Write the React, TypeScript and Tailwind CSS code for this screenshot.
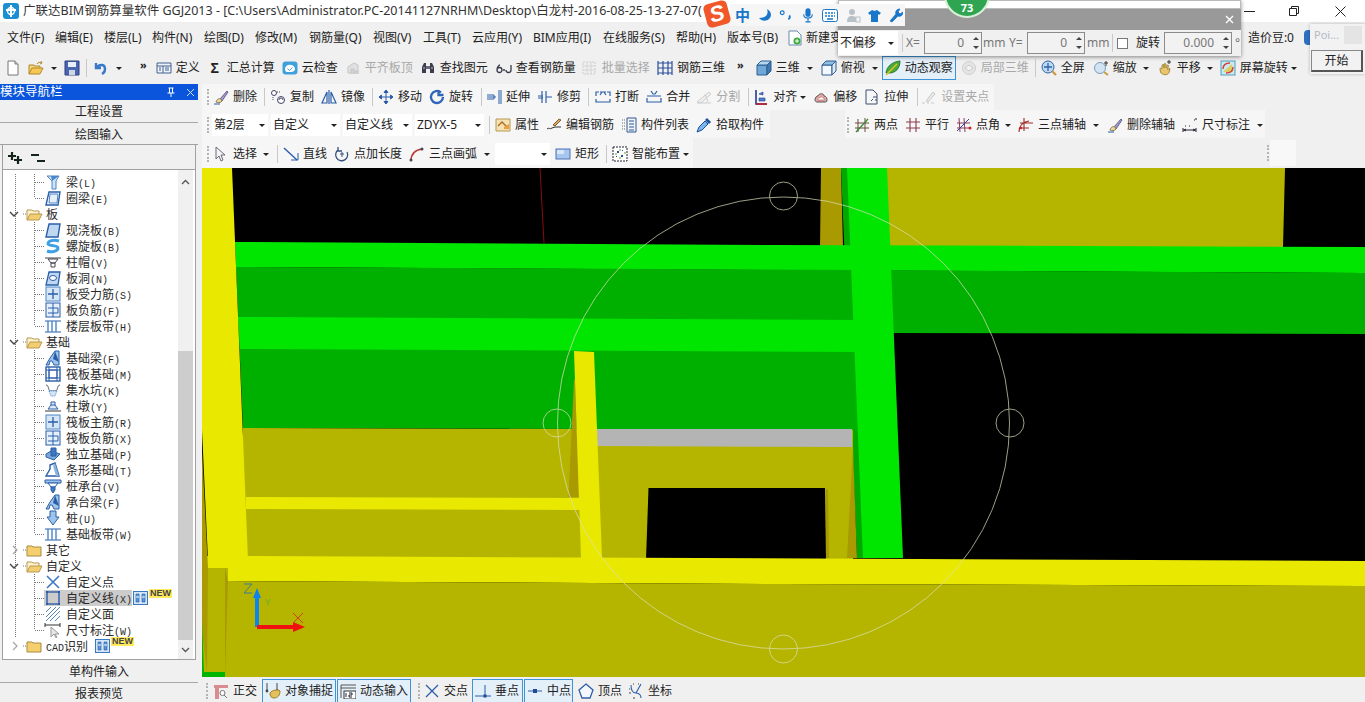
import React from "react";

const ui = "font-['Noto_Sans','Noto_Sans_CJK_SC',sans-serif]";
const B = "#2b5ea8";
const L = "#4a86c8";

// little 16x16 toolbar and tree drawings
const icons: Record<string, React.ReactNode> = {
  doc: <><path d="M3 1h7l3 3v11H3z" fill="#fff" stroke="#777" /><path d="M10 1v3h3" fill="#ddd" stroke="#777" /></>,
  open: <><path d="M1 14V5h5l1 1h5v2" fill="#f4d27a" stroke="#b08a2a" /><path d="M1 14l3-6h11l-3 6z" fill="#f7c654" stroke="#b08a2a" /><path d="M9 4c1-2 3-2 5-1l-1-2m1 2l-2 1" fill="none" stroke="#b08a2a" /></>,
  save: <><path d="M1 1h14v14H1z" fill="#4b66b0" stroke="#2c3f80" /><path d="M4 2h8v5H4z" fill="#e8eef8" /><path d="M5 10h6v5H5z" fill="#cfd6e6" /></>,
  undo: <path d="M3 3v5h5M4 7c3-3 8-3 8 2 0 2-1 4-3 5" fill="none" stroke="#3b78c8" strokeWidth="2.4" />,
  define: <><path d="M1 3h14v10H1z" fill="#eef3fa" stroke="#44618f" /><path d="M1 6h14M7 6v7M9 8h4M9 10h4M3 8h2M3 10h2" stroke="#44618f" fill="none" /></>,
  cloud: <><rect x="0.5" y="1.5" width="15" height="13" rx="3" fill="#3fa0dc" /><path d="M3 9c0-3 3-5 6-4 2 0 4 2 4 4s-2 3-4 3H5c-1 0-2-1-2-3z" fill="#fff" /><path d="M5.5 8.5l2 2 3-3" fill="none" stroke="#3fa0dc" /></>,
  alignTop: <><path d="M3 13V7l6-4 4 2v8z" fill="#ddd" stroke="#bbb" /><path d="M6 14V9h3v5M10 14v-3h3v3" fill="#ccc" stroke="#bbb" /></>,
  binoc: <><path d="M2 13V7l2-4h2v10zM10 3h2l2 4v6h-4z" fill="#3d3d4d" /><path d="M6 6h4v3H6z" fill="#6a6a7a" /><path d="M3 8h2M11 8h2" stroke="#c8c8d8" /></>,
  glasses: <path d="M1 10c0-3 2-5 3-5M1 10a2.5 2.5 0 105 0 2.5 2.5 0 10-5 0M7 10h2M15 5v5a2.5 2.5 0 11-5 0" fill="none" stroke="#3a3a4a" strokeWidth="1.3" />,
  batch: <><path d="M1 2h12v12H1z" fill="#f0f0f0" stroke="#c4c4c4" strokeDasharray="2 1" /><path d="M1 6h12M1 10h12M5 2v12M9 2v12" stroke="#cfcfcf" /></>,
  rebar: <path d="M1 3h14M1 13h14M1 1v14M6 1v14M11 1v14M15 1v14M1 8h14" fill="none" stroke="#2d4f9a" strokeWidth="1.2" />,
  cube: <><path d="M1 5h10v10H1z" fill="#6fa8d8" stroke="#2f5f90" /><path d="M1 5l4-4h10L11 5z" fill="#b7d6ee" stroke="#2f5f90" /><path d="M11 5l4-4v10l-4 4z" fill="#3f78b0" stroke="#2f5f90" /></>,
  cubeTop: <><path d="M1 5h10v10H1z" fill="#f2f8fd" stroke="#2f5f90" /><path d="M1 5l4-4h10L11 5z" fill="#8ec0e6" stroke="#2f5f90" /><path d="M11 5l4-4v10l-4 4z" fill="#dceaf5" stroke="#2f5f90" /></>,
  orbit: <><path d="M1 13C2 6 7 2 15 1c0 7-4 12-11 12z" fill="#4aa83c" stroke="#2a7a2a" /><path d="M1 15L12 4" stroke="#d8c820" strokeWidth="1.5" /></>,
  local3d: <><circle cx="8" cy="8" r="6.5" fill="#e2e2e2" stroke="#c8c8c8" /><path d="M4 8l4-3 4 3-4 3z" fill="#f4f4f4" stroke="#c0c0c0" /></>,
  zoomAll: <><circle cx="7" cy="7" r="6" fill="#bcd8f2" stroke="#2f64a8" /><path d="M7 3v8M3 7h8" stroke="#2f64a8" strokeWidth="1.3" /><path d="M11 11l4 4" stroke="#c89a3c" strokeWidth="2.2" /></>,
  zoom: <><circle cx="7" cy="8" r="5.5" fill="#d2e4f4" stroke="#7c9cc0" /><path d="M11 12l4 3" stroke="#c8a040" strokeWidth="2" /><path d="M13 1v5M11 3h4" stroke="#333" /></>,
  hand: <><path d="M3 9c0-2 2 0 2 0V5l1.5-.5L7 8l.5-4.5L9 4v4l1.5-3 1 .5-1 4 2.5-1-1 4c-1 3-7 3-8.5-.5z" fill="#e9c66e" stroke="#a68a3c" /><path d="M12 0v4M10 2h4" stroke="#333" /></>,
  screenRot: <><rect x="1" y="1" width="14" height="14" fill="#cfe8f0" stroke="#4aa0c0" /><path d="M3 12L12 4l1 8z" fill="#dccf62" /><path d="M3 9c0-4 3-6 7-6M13 7c0 4-3 6-7 6" fill="none" stroke="#d04040" strokeWidth="1.4" /></>,
  erase: <><path d="M7 10l7-8 1 1-6 9z" fill="#a09ac8" stroke="#6a6490" /><path d="M3 13c1-3 3-4 5-3l1 2c-2 2-4 2-6 1z" fill="#e8d8a0" stroke="#8a7a50" /><path d="M1 15h6" stroke="#2b5ea8" /></>,
  copy: <><circle cx="4" cy="4" r="2.5" fill="#fff" stroke="#446" /><circle cx="11" cy="11" r="3.5" fill="#fff" stroke="#446" /><path d="M7 3h3M3 8v3" stroke="#446" strokeDasharray="1 1" /><path d="M9 11a2 2 0 014 0" fill="none" stroke="#446" /></>,
  mirror: <path d="M8 1v14M6 3L1 14h5zM10 3l5 11h-5z" fill="none" stroke={B} strokeWidth="1.2" />,
  move: <path d="M8 1v14M1 8h14M8 1L6 3.5h4zM8 15l-2-2.5h4zM1 8l2.5-2v4zM15 8l-2.5-2v4z" fill={B} stroke={B} />,
  rotate: <path d="M12 3.5A6 6 0 1 0 14 8M9.5 1v5h5" fill="none" stroke="#2f64b8" strokeWidth="2.3" />,
  extend: <path d="M1 8h9M1 6h7v4H1M13 1v14M15 1v14" fill="none" stroke={B} />,
  trim: <path d="M5 2v12M9 2v12M1 7h5M1 9h5M9 8h6" fill="none" stroke={B} strokeWidth="1.2" />,
  breakIt: <path d="M1 7V3h3M15 7V3h-3M1 10v3h14v-3M5 6l2-3M11 6L9 3M5 3h6" fill="none" stroke={B} strokeWidth="1.2" />,
  merge: <path d="M1 9v4h14V9M1 7h14M5 2l2 3 2 0 2-3" fill="none" stroke={B} strokeWidth="1.2" />,
  split: <path d="M1 13L13 3l2 2L5 14zM1 14h14M9 5l3 8" fill="#ececec" stroke="#c4c4c4" />,
  alignTo: <><path d="M3 1v14h11" fill="none" stroke="#223d90" strokeWidth="1.6" /><path d="M3 15h11" stroke="#c02030" strokeWidth="1.6" /><path d="M6 5l4-2v3zM6 9h6v3H6z" fill="#4a80c8" stroke="#223d90" strokeWidth=".6" /></>,
  offset: <><path d="M2 11c0-3 2-4 3-4 1-3 6-3 6 0 2 0 3 2 3 4s-1 2-2 2H4c-1 0-2-1-2-2z" fill="#e8a8a8" stroke="#555" /><path d="M5 10c0-1 1-2 2-1 1-2 3-1 3 0 2 0 2 2 1 2H6c-1 0-1 0-1-1z" fill="#fff" stroke="#a05050" strokeWidth=".6" /></>,
  stretch: <path d="M2 15V1h7l4 4v10zM9 8h4M11 11h2M7 12l2-2" fill="none" stroke="#3a4f70" />,
  gripSet: <path d="M1 14h3M6 14h2M10 14h3M5 12l7-9 2 2-7 8z" fill="#e6e6e6" stroke="#c0c0c0" />,
  props: <><path d="M1 2h14v12H1z" fill="#f4e2b4" stroke="#b89a50" /><path d="M3 9l4-4 6 6" fill="none" stroke="#b06a20" strokeWidth="1.4" /><path d="M9 10l5-3v5H9z" fill="#e8a040" /></>,
  editBar: <><path d="M1 12c2-2 3 1 5-1l3-1M9 10h6" fill="none" stroke="#333" /><path d="M7 8l6-6 2 1-6 6z" fill="#d8a860" stroke="#806030" /></>,
  list: <><path d="M1 3h3M1 6h3M1 9h3M1 12h3" stroke="#666" strokeDasharray="1 1" /><path d="M6 1h9v14H6z" fill="#eef4fa" stroke="#33568c" /><path d="M8 4h5M8 7h5M8 10h5M8 13h5" stroke="#33568c" /></>,
  pick: <><path d="M1 15l2-5 6-6 3 3-6 6z" fill="#7ab8ec" stroke="#1d4f9a" /><path d="M9 3l2-2 4 4-2 2z" fill="#1d4f9a" /></>,
  twoPt: <><path d="M4 2v13M11 1v14M1 6h14M1 11h14" stroke="#6b4a3a" /><path d="M2 15L14 2" stroke="#3a8a3a" strokeWidth="1.3" /></>,
  parallel: <path d="M5 1v14M11 1v14M1 5h14M1 11h14" stroke="#8a3a4a" strokeWidth="1.1" fill="none" />,
  angle: <><path d="M3 1l1 14M8 1l1 14M1 6h13M1 11h13" stroke="#8a3a5a" fill="none" /><path d="M1 14L13 2" stroke="#2a3f90" /><circle cx="14" cy="11" r="1.5" fill="#d02020" /></>,
  threePt: <><path d="M1 15c0-6 4-10 10-11M6 1v13M2 6h13M2 11h9" fill="none" stroke="#a02a2a" strokeWidth="1.1" /><circle cx="3" cy="11" r="1.2" fill="#d02020" /></>,
  dim: <path d="M1 11v4M14 11v4M1 13h13M3 9h1M7 9h1M12 3h1M14 1v2M4 12l-2 1 2 1M11 12l2 1-2 1" fill="none" stroke="#223" />,
  select: <path d="M3 1v12l3-3 2 5 2-1-2-5h4z" fill="#f4f4f4" stroke="#6a6a7a" />,
  line: <><path d="M1 2l13 12" stroke="#2a5ea8" strokeWidth="1.4" /><path d="M8 14h7V7" fill="none" stroke="#2a5ea8" /></>,
  lenPt: <><path d="M13 6a6 6 0 11-9-2M4 1v4h4" fill="none" stroke="#33507c" strokeWidth="1.3" /><path d="M8 6v5M6 8h4" stroke="#33507c" /></>,
  arc: <><path d="M2 15c0-7 4-11 11-12" fill="none" stroke="#c03838" strokeWidth="1.5" /><circle cx="13" cy="3" r="1.5" fill="#445" /><circle cx="2" cy="14" r="1.5" fill="#445" /></>,
  rect: <><rect x="1" y="3" width="14" height="10" fill="#a9c6ee" stroke="#4a72b8" /><rect x="2" y="4" width="7" height="4" fill="#d8e6f8" /></>,
  smart: <><rect x="1" y="1" width="14" height="14" fill="#fff" stroke="#223" strokeDasharray="2 1" /><path d="M5 5h2v2H5zM10 4h1v1h-1zM4 10h1v1H4zM9 9h2v2H9z" fill="#2a4f90" /><path d="M8 3v2M3 8h2M12 7h2M7 12h2" stroke="#60a030" /></>,
  ortho: <><path d="M1 2h14v3H6v11H2V5H1z" fill="#d88c90" /><circle cx="9.5" cy="10" r="2.5" fill="#fff" stroke="#777" /><path d="M11 12l3 3" stroke="#777" /></>,
  snap: <><path d="M2 0v8M12 0v8" stroke="#444" /><circle cx="2" cy="8" r="1.4" fill="#444" /><circle cx="12" cy="8" r="1.4" fill="#444" /><path d="M5 10c2-3 8-4 10-2 0 4-2 7-6 7-3 0-4-2-4-5z" fill="#e4c05c" stroke="#9c7f2c" /></>,
  dyn: <><path d="M1 2h15M1 5h15M1 15V2" stroke="#555" fill="none" /><rect x="4" y="8" width="12" height="8" fill="#fff" stroke="#333" /><path d="M6 10v4M9 10h3v2H9v2h3" fill="none" stroke="#223" /></>,
  cross: <path d="M2 2l12 12M14 2L2 14" stroke="#2a5ea8" strokeWidth="1.3" />,
  perp: <><path d="M0 13h16M10 2v11" stroke="#2a5ea8" /><rect x="8.5" y="11.5" width="3" height="3" fill="#1f4a98" /></>,
  mid: <><path d="M1 8h14" stroke="#2a5ea8" /><rect x="6" y="6" width="4" height="4" fill="#1f4a98" /></>,
  vertex: <path d="M8 1l7 6-3 8H4L1 7z" fill="#f4f8fd" stroke="#2f5fa8" strokeWidth="1.3" />,
  coord: <><path d="M3 2c0 5 1 8 5 8s5 3 5 5M13 1l-5 9" fill="none" stroke="#2a5ea8" strokeWidth="1.1" /><path d="M1 6h1M1 10h2M5 1h1M5 15h2M10 1h1" stroke="#444" /></>,
  plusPlus: <path d="M5 2v8M1 6h8M11 6v8M7 10h8" stroke="#14241a" strokeWidth="2.2" />,
  minusMinus: <path d="M1 5h8M7 11h8" stroke="#14241a" strokeWidth="2.2" />,
  beam: <><path d="M2 2h12l-3 5v8H7V7z" fill="#cfe4f6" stroke={L} /><path d="M6 2l8 0-7 5z" fill={L} /></>,
  ring: <><path d="M4 2h11l-2 13H1z" fill="#fff" stroke={B} strokeWidth="1.4" /><path d="M5 4h8l-1 9H4z" fill="#e6eff8" stroke={L} /></>,
  slab: <path d="M4 2h11l-2 13H1z" fill="#bfd8f2" stroke={B} strokeWidth="1.4" />,
  spiral: <path d="M14 3C8 1 3 3 3 6c0 2 10 1 10 4s-6 5-11 3" fill="none" stroke="#3ea0e4" strokeWidth="3" />,
  cap: <><path d="M0 3h16v2H0z" fill="#a0a0a0" /><path d="M3 5h10l-3 4H6zM6 9h4v4H6z" fill="#fff" stroke="#445" /></>,
  hole: <><path d="M4 2h11l-2 13H1z" fill="#bfd8f2" stroke={B} strokeWidth="1.3" /><ellipse cx="8" cy="8" rx="3.5" ry="2.5" fill="#fff" stroke={B} /></>,
  grid1: <><rect x="1" y="1" width="14" height="14" fill="#d6e6f6" stroke={L} /><path d="M8 3v10M3 8h10" stroke={B} strokeWidth="1.3" /></>,
  grid2: <><rect x="1" y="1" width="14" height="14" fill="#e6f0fa" stroke={B} /><path d="M8 1v14M3 6h10v5H3" fill="none" stroke={B} /></>,
  band: <><path d="M0 3h16M0 14h16" stroke={B} /><path d="M3 3v11M7 3v11M11 3v11" stroke={L} strokeWidth="1.4" /></>,
  fbeam: <><path d="M1 15l4-7 5-7h4v14H9L7 11H5l-1 4z" fill="#9dc4ea" stroke={B} /><path d="M10 1l-2 8 6 3z" fill={B} /></>,
  raft: <><rect x="1" y="1" width="14" height="14" fill="#fff" stroke={B} strokeWidth="1.4" /><path d="M4 4h8v8H4zM1 4h14M1 12h14M4 1v14M12 1v14" fill="none" stroke={B} /></>,
  pit: <><path d="M1 3c3 0 2 5 4 6h6c2-1 1-6 4-6" fill="none" stroke="#456" /><path d="M4 9l2 5h4l2-5z" fill="#d6e6f6" stroke={L} strokeDasharray="1 1" /></>,
  pier: <><path d="M0 12h16v2H0z" fill="#9a9a9a" /><path d="M3 11l3-4h4l3 4zM6 7V4h4v3" fill="#dfeaf6" stroke={B} /></>,
  footing: <><path d="M1 8l5-3 9 3-6 6-8-3z" fill="#7aa8d8" stroke={B} /><path d="M6 2h5v8H6z" fill="#3f78c0" stroke={B} /></>,
  strip: <><path d="M1 14l4-7V3l5-2 4 13z" fill="#fff" stroke={B} strokeWidth="1.4" /><path d="M10 1l4 13h-3L8 4z" fill="#8ab4e0" /></>,
  pileCap: <><path d="M0 2h16v3H0z" fill="#9dc4ea" stroke={B} /><path d="M3 5h10l-3 4H6z" fill="#fff" stroke={B} /><path d="M6 9h4v3l-2 3-2-3z" fill="#3f78c0" stroke={B} /></>,
  pile: <><path d="M5 1h6v6h3l-3 4-3 4-3-4-3-4h3z" fill="#9dc4ea" stroke={B} /></>,
  pt: <path d="M2 2l12 12M14 2L2 14" stroke="#3f78c0" strokeWidth="1.6" />,
  cline: <><rect x="2" y="2" width="12" height="12" fill="none" stroke={B} strokeWidth="1.4" /><path d="M1 1h2v2H1zM13 1h2v2h-2zM1 13h2v2H1zM13 13h2v2h-2z" fill={B} /></>,
  hatch: <path d="M1 6l5-5M1 11L11 1M1 15L15 1M5 15L15 5M10 15l5-5" stroke="#5a86c0" />,
  dimCur: <><path d="M0 1v4M15 1v4M0 3h15" stroke="#333" /><path d="M6 5v10l3-3 2 4 1-1-2-3h4z" fill="#e6e6e6" stroke="#999" /></>,
  cols: <><rect x="0.5" y="0.5" width="14" height="13" fill="#d6e6f8" stroke="#3a78c0" /><path d="M3 3h3v8H3zM9 3h3v8H9z" fill="#5a96d8" stroke="#1f5aa0" strokeWidth=".6" /><path d="M3 6h3M9 6h3" stroke="#fff" /></>,
};

function Icon({ n, className = "" }: { n: string; className?: string }) {
  return (
    <svg viewBox="0 0 16 16" className={`w-4 h-4 shrink-0 ${className}`}>
      {icons[n]}
    </svg>
  );
}

function Caret({ c = "" }: { c?: string }) {
  return (
    <span
      className={`w-0 h-0 shrink-0 border-l-[3px] border-r-[3px] border-t-[3px] border-l-transparent border-r-transparent border-t-[#222] ${c}`}
    />
  );
}

function Tool({
  n,
  t,
  c = "",
  gray = false,
  drop = "",
}: {
  n: string;
  t: string;
  c?: string;
  gray?: boolean;
  drop?: string;
}) {
  return (
    <div className={`flex items-center shrink-0 ${gray ? "text-[#a8a8a8]" : ""} ${c}`}>
      <Icon n={n} className={gray ? "opacity-80" : ""} />
      <span className="ml-1 whitespace-nowrap">{t}</span>
      {drop && <Caret c={drop} />}
    </div>
  );
}

function Sep({ c = "" }: { c?: string }) {
  return <div className={`w-px h-[18px] bg-[#c8c8c8] shrink-0 ${c}`} />;
}

function Grip({ c = "" }: { c?: string }) {
  return <div className={`w-[2px] h-[16px] shrink-0 border-l-2 border-dotted border-[#b4b4b4] ${c}`} />;
}

function Chevrons({ c = "" }: { c?: string }) {
  return <span className={`text-[11px] leading-none font-bold -mt-2 shrink-0 ${c}`}>»</span>;
}

function Select({ t, c }: { t: string; c: string }) {
  return (
    <div className={`h-[22px] bg-white flex items-center justify-between pl-[2px] pr-[3px] shrink-0 ${c}`}>
      <span className="whitespace-nowrap">{t}</span>
      <Caret />
    </div>
  );
}

function Active({ n, t, c = "", w }: { n: string; t: string; c?: string; w: string }) {
  return (
    <div className={`h-[24px] border border-[#3d93d6] bg-[#e3eff9] flex items-center pl-[2px] shrink-0 ${w} ${c}`}>
      <Icon n={n} />
      <span className="ml-1 whitespace-nowrap">{t}</span>
    </div>
  );
}

function SpinBox({ v, c }: { v: string; c: string }) {
  return (
    <div className={`h-[22px] border border-[#8c8c8c] bg-[#f2f2f2] flex items-center justify-end text-[#777] shrink-0 ${c}`}>
      <span>{v}</span>
      <div className="flex flex-col gap-[6px] ml-[9px] mr-[2px]">
        <span className="w-0 h-0 border-l-[3px] border-r-[3px] border-b-[3px] border-l-transparent border-r-transparent border-b-[#444]" />
        <span className="w-0 h-0 border-l-[3px] border-r-[3px] border-t-[3px] border-l-transparent border-r-transparent border-t-[#444]" />
      </div>
    </div>
  );
}

type Row = {
  t: string;
  k?: string;
  i?: string;
  f?: "open" | "closed";
  last?: boolean;
  sel?: boolean;
  isNew?: boolean;
  noOuter?: boolean;
};

const rows: Row[] = [
  { t: "梁", k: "(L)", i: "beam" },
  { t: "圈梁", k: "(E)", i: "ring", last: true },
  { t: "板", f: "open" },
  { t: "现浇板", k: "(B)", i: "slab" },
  { t: "螺旋板", k: "(B)", i: "spiral" },
  { t: "柱帽", k: "(V)", i: "cap" },
  { t: "板洞", k: "(N)", i: "hole" },
  { t: "板受力筋", k: "(S)", i: "grid1" },
  { t: "板负筋", k: "(F)", i: "grid2" },
  { t: "楼层板带", k: "(H)", i: "band", last: true },
  { t: "基础", f: "open" },
  { t: "基础梁", k: "(F)", i: "fbeam" },
  { t: "筏板基础", k: "(M)", i: "raft" },
  { t: "集水坑", k: "(K)", i: "pit" },
  { t: "柱墩", k: "(Y)", i: "pier" },
  { t: "筏板主筋", k: "(R)", i: "grid1" },
  { t: "筏板负筋", k: "(X)", i: "grid2" },
  { t: "独立基础", k: "(P)", i: "footing" },
  { t: "条形基础", k: "(T)", i: "strip" },
  { t: "桩承台", k: "(V)", i: "pileCap" },
  { t: "承台梁", k: "(F)", i: "fbeam" },
  { t: "桩", k: "(U)", i: "pile" },
  { t: "基础板带", k: "(W)", i: "band", last: true },
  { t: "其它", f: "closed" },
  { t: "自定义", f: "open" },
  { t: "自定义点", i: "pt" },
  { t: "自定义线", k: "(X)", i: "cline", sel: true, isNew: true },
  { t: "自定义面", i: "hatch" },
  { t: "尺寸标注", k: "(W)", i: "dimCur", last: true },
  { t: "识别", f: "closed", k: "CAD", isNew: true, noOuter: true },
];

function NewMark({ c }: { c: string }) {
  return (
    <div className={`flex items-start shrink-0 ${c}`}>
      <svg viewBox="0 0 15 14" className="w-[15px] h-[14px]">
        {icons.cols}
      </svg>
      <span className="ml-px -mt-[2px] h-[9px] px-px bg-[#ffe95c] text-[9px] leading-[9px] font-bold text-[#444] font-['Liberation_Sans',sans-serif]">
        NEW
      </span>
    </div>
  );
}

function TreeRow({ r }: { r: Row }) {
  const outer = !r.noOuter;
  if (r.f) {
    return (
      <div className="h-4 flex items-center">
        <svg width="41" height="16" className="shrink-0">
          {outer && <path d="M12.5 0v16" stroke="#777" strokeDasharray="1 1" />}
          <path d="M20 8h3" stroke="#777" strokeDasharray="1 1" />
          {r.f === "open" ? (
            <path d="M7 6l4 4 4-4" fill="none" stroke="#444" strokeWidth="1.4" />
          ) : (
            <path d="M10 4l4 4-4 4" fill="none" stroke="#aaa" strokeWidth="1.4" />
          )}
          {r.f === "open" ? (
            <g>
              <path d="M24 14V4h5l1 1h6v3" fill="#fff3cf" stroke="#b99a50" />
              <path d="M24 14l3-6h12l-3 6z" fill="#f2cd72" stroke="#b99a50" />
            </g>
          ) : (
            <path d="M24 14V4h5l1 1h8v9z" fill="#f5cf6e" stroke="#a98a40" />
          )}
        </svg>
        <span className="ml-[2px] whitespace-nowrap">
          {r.k && <span className="font-['Liberation_Mono',monospace] text-[10px]">{r.k}</span>}
          {r.t}
        </span>
        {r.isNew && <NewMark c="ml-[7px]" />}
      </div>
    );
  }
  return (
    <div className="h-4 flex items-center">
      <svg width="60" height="16" className="shrink-0">
        {r.sel && <rect x="41" y="0" width="19" height="16" fill="#cccccc" />}
        <path d="M12.5 0v16" stroke="#777" strokeDasharray="1 1" />
        <path d={r.last ? "M31.5 0v8" : "M31.5 0v16"} stroke="#777" strokeDasharray="1 1" />
        <path d="M32 8.5h10" stroke="#777" strokeDasharray="1 1" />
        <g transform="translate(42 0)">{icons[r.i!]}</g>
      </svg>
      <span className={`pl-[3px] h-4 leading-4 whitespace-nowrap ${r.sel ? "bg-[#cccccc]" : ""}`}>
        {r.t}
        {r.k && <span className="font-['Liberation_Mono',monospace] text-[10px]">{r.k}</span>}
      </span>
      {r.isNew && <NewMark c="ml-px" />}
    </div>
  );
}

function Sidebar() {
  return (
    <div className="w-[198px] shrink-0 flex flex-col h-[618px]">
      <div className="h-[16px] bg-[#0a55dc] text-white flex items-center text-[12.5px] leading-none shrink-0">
        <span>模块导航栏</span>
        <span className="ml-auto mr-[10px] text-[10px]">
          <svg width="10" height="11" viewBox="0 0 10 11">
            <path d="M2.5 1h5M3.5 1v5M6.5 1v5M1.5 6h7M5 6v4" stroke="#fff" fill="none" />
          </svg>
        </span>
        <svg width="9" height="9" viewBox="0 0 9 9" className="mr-[3px]">
          <path d="M1 1l7 7M8 1L1 8" stroke="#cfe0ff" />
        </svg>
      </div>
      <div className="h-[23px] pt-[2px] border-b border-[#a8a8a8] flex items-center justify-center shrink-0">工程设置</div>
      <div className="h-[22px] pt-[2px] border-b border-[#a0a0a0] flex items-center justify-center shrink-0">绘图输入</div>
      <div className="h-[515px] mx-[2px] border-x border-b border-[#a0a0a0] flex flex-col shrink-0 bg-white">
        <div className="h-[25px] pt-[2px] bg-[#f0f0f0] border-b border-[#a0a0a0] flex items-center pl-[4px] gap-[7px] shrink-0">
          <Icon n="plusPlus" />
          <Icon n="minusMinus" />
        </div>
        <div className="flex flex-1 min-h-0">
          <div className="flex-1 pt-[4px] overflow-hidden font-['Noto_Sans_CJK_SC',sans-serif] text-[12px] text-[#2a2a2a]">
            {rows.map((r) => (
              <TreeRow key={r.t + (r.k ?? "")} r={r} />
            ))}
          </div>
          <div className="w-[15px] mr-[2px] flex flex-col bg-[#f0f0f0] shrink-0">
            <div className="h-[22px] pt-[2px] flex items-center justify-center">
              <svg width="9" height="6">
                <path d="M1 5l3.5-3.5L8 5" fill="none" stroke="#555" strokeWidth="1.3" />
              </svg>
            </div>
            <div className="h-[159px]" />
            <div className="flex-1 bg-[#cdcdcd]" />
            <div className="h-[19px] flex items-center justify-center">
              <svg width="9" height="6">
                <path d="M1 1l3.5 3.5L8 1" fill="none" stroke="#555" strokeWidth="1.3" />
              </svg>
            </div>
          </div>
        </div>
      </div>
      <div className="h-[23px] pt-[2px] border-b border-[#a8a8a8] flex items-center justify-center shrink-0">单构件输入</div>
      <div className="flex-1 pt-[2px] flex items-center justify-center">报表预览</div>
    </div>
  );
}

function Canvas() {
  return (
    <svg viewBox="202 168 1163 509" className="w-[1163px] h-[509px] block bg-black">
      <path d="M887 168H1285L1283 247H887z" fill="#b5b500" />
      <path d="M821 168H841L843 247H820z" fill="#a89a00" />
      <path d="M841 168H848L864 558H857z" fill="#00a800" />
      <path d="M540 168L544 243" stroke="#8a0c0c" fill="none" />
      <path d="M235 242L780 245L1365 247V273L780 270L236 267z" fill="#00e600" />
      <path d="M236 267L860 270L1365 273V334L890 333V430L243 428z" fill="#00b000" />
      <path d="M238 317L860 320V352L240 349z" fill="#00e600" />
      <path d="M243 428L853 430V560H240z" fill="#b5b500" />
      <path d="M597 429H852V447L597 446z" fill="#b4b4b4" />
      <path d="M648.5 488H825L826 560H646z" fill="#000" />
      <path d="M826 489H828L829 558H826z" fill="#a89a00" />
      <path d="M853 447L857 558H847z" fill="#a89a00" />
      <path d="M574 380L568.5 497H579L575 380z" fill="#a89a00" />
      <path d="M847 168H887L903 558H863z" fill="#00e600" />
      <path d="M202 168H232L248 560H208L202 430z" fill="#e8e800" />
      <path d="M246 497L580 498V510L246 509z" fill="#e8e800" />
      <path d="M574 351L594 352L602 558H581z" fill="#e8e800" />
      <path d="M207 556H246L700 558L1365 561V586L780 584L228 581V568H207z" fill="#e8e800" />
      <path d="M228 581L780 584L1365 586V677H202V568H228z" fill="#b5b500" />
      <path d="M202 450L208 568L207 672L203 640L202 620z" fill="#a89a00" />
      <path d="M202 620L204 672H225V677H202z" fill="#00b400" />
      <path d="M225 568L228 581L225 677z" fill="#a89a00" />
      <g fill="none" stroke="#e0e0c0" strokeWidth="1" opacity="0.7">
        <circle cx="783.5" cy="423" r="226" />
        <circle cx="783.5" cy="196" r="14" />
        <circle cx="557" cy="423" r="14" />
        <circle cx="1010" cy="423" r="14" />
        <circle cx="783.5" cy="649" r="14" />
      </g>
      <path d="M257 627V596" stroke="#0a84f0" strokeWidth="4" />
      <path d="M257 588l-4 10h8z" fill="#0a84f0" />
      <path d="M257 627H296" stroke="#f01010" strokeWidth="4" />
      <path d="M305 627l-12-5v10z" fill="#f01010" />
      <path d="M244 584h8l-8 9h8" fill="none" stroke="#3c7c94" />
      <path d="M293 613l10 10M303 613l-10 10" stroke="#d04010" />
      <path d="M266 599l2 4 2-4M268 603v3" stroke="#70b030" fill="none" />
    </svg>
  );
}

export default function App() {
  return (
    <div className={`relative w-[1365px] h-[702px] overflow-hidden bg-[#f0f0f0] text-[12px] text-[#222] ${ui}`}>
      {/* Title */}
      <div className="h-[22px] bg-white flex items-center">
        <svg viewBox="0 0 16 16" className="w-4 h-4 ml-[3px] shrink-0">
          <rect width="16" height="16" rx="3" fill="#1b8fd2" />
          <path d="M8 2v12M3 7h10" stroke="#fff" strokeWidth="2" />
          <circle cx="8" cy="8" r="3.5" fill="none" stroke="#fff" strokeWidth="1.4" />
        </svg>
        <span className="ml-1 text-[12.5px] whitespace-nowrap text-[#333]">
          广联达BIM钢筋算量软件 GGJ2013 - [C:\Users\Administrator.PC-20141127NRHM\Desktop\白龙村-2016-08-25-13-27-07(
        </span>
        <svg width="11" height="1" className="ml-auto mr-[34px] shrink-0">
          <path d="M0 .5h11" stroke="#222" />
        </svg>
        <svg width="10" height="10" className="mr-[36px] shrink-0">
          <path d="M.5 2.5h7v7h-7zM2.5 2.5v-2h7v7h-2" fill="none" stroke="#222" />
        </svg>
        <svg width="11" height="11" className="mr-[19px] shrink-0">
          <path d="M.5.5l10 10M10.5.5l-10 10" stroke="#222" />
        </svg>
      </div>

      {/* Menu */}
      <div className="h-[30px] pt-[2px] flex items-center pl-[7px] whitespace-nowrap">
        <span className="w-[48px]">文件(F)</span>
        <span className="w-[49px]">编辑(E)</span>
        <span className="w-[48px]">楼层(L)</span>
        <span className="w-[52px]">构件(N)</span>
        <span className="w-[51px]">绘图(D)</span>
        <span className="w-[54px]">修改(M)</span>
        <span className="w-[64px]">钢筋量(Q)</span>
        <span className="w-[50px]">视图(V)</span>
        <span className="w-[49px]">工具(T)</span>
        <span className="w-[61px]">云应用(Y)</span>
        <span className="w-[70px]">BIM应用(I)</span>
        <span className="w-[73px]">在线服务(S)</span>
        <span className="w-[51px]">帮助(H)</span>
        <span className="w-[60px]">版本号(B)</span>
        <svg viewBox="0 0 16 16" className="w-4 h-4 shrink-0">
          <path d="M2 1h8l4 4v10H2z" fill="#fff" stroke="#6a8ab0" />
          <circle cx="10" cy="11" r="3.5" fill="#3caa3c" />
          <path d="M10 9v4M8 11h4" stroke="#fff" />
        </svg>
        <span className="ml-[3px]">新建变更</span>
        <span className="ml-auto mr-[71px]">造价豆:0</span>
      </div>

      {/* Main toolbar */}
      <div className="h-[30px] pt-[2px] flex items-center pl-[5px]">
        <Icon n="doc" />
        <Icon n="open" className="ml-[7px]" />
        <Caret c="ml-[7px]" />
        <Icon n="save" className="ml-[7px]" />
        <Sep c="ml-[6px]" />
        <Icon n="undo" className="ml-[6px]" />
        <Caret c="ml-[7px]" />
        <Chevrons c="ml-[18px]" />
        <Tool n="define" t="定义" c="ml-[9px]" />
        <div className="flex items-center shrink-0 ml-[7px]">
          <span className="w-4 text-center text-[14px] font-bold leading-none font-['Liberation_Sans',sans-serif]">Σ</span>
          <span className="ml-1">汇总计算</span>
        </div>
        <Tool n="cloud" t="云检查" c="ml-[7px]" />
        <Tool n="alignTop" t="平齐板顶" c="ml-[7px]" gray />
        <Tool n="binoc" t="查找图元" c="ml-[7px]" />
        <Tool n="glasses" t="查看钢筋量" c="ml-[8px]" />
        <Tool n="batch" t="批量选择" c="ml-[6px]" gray />
        <Tool n="rebar" t="钢筋三维" c="ml-[7px]" />
        <Chevrons c="ml-[12px]" />
        <Tool n="cube" t="三维" c="ml-[12px]" drop="ml-[7px]" />
        <Tool n="cubeTop" t="俯视" c="ml-[8px]" drop="ml-[7px]" />
        <Active n="orbit" t="动态观察" c="ml-[4px]" w="w-[74px]" />
        <Tool n="local3d" t="局部三维" c="ml-[5px]" gray />
        <Sep c="ml-[6px]" />
        <Tool n="zoomAll" t="全屏" c="ml-[5px]" />
        <Tool n="zoom" t="缩放" c="ml-[8px]" drop="ml-[6px]" />
        <Tool n="hand" t="平移" c="ml-[8px]" drop="ml-[6px]" />
        <Tool n="screenRot" t="屏幕旋转" c="ml-[7px]" drop="ml-[3px]" />
      </div>

      <div className="h-[2px]" />

      {/* Body */}
      <div className="flex">
        <Sidebar />
        <div className="ml-[4px] w-[1163px] flex flex-col">
          {/* Edit toolbar */}
          <div className="h-[26px] flex items-center">
            <div className="h-full w-[792px] bg-[#f6f6f6] flex items-center pl-[5px]">
              <Grip />
              <Tool n="erase" t="删除" c="ml-[4px]" />
              <Sep c="ml-[7px]" />
              <Tool n="copy" t="复制" c="ml-[5px]" />
              <Tool n="mirror" t="镜像" c="ml-[7px]" />
              <Sep c="ml-[7px]" />
              <Tool n="move" t="移动" c="ml-[5px]" />
              <Tool n="rotate" t="旋转" c="ml-[7px]" />
              <Sep c="ml-[8px]" />
              <Tool n="extend" t="延伸" c="ml-[4px]" />
              <Tool n="trim" t="修剪" c="ml-[7px]" />
              <Sep c="ml-[7px]" />
              <Tool n="breakIt" t="打断" c="ml-[6px]" />
              <Tool n="merge" t="合并" c="ml-[7px]" />
              <Tool n="split" t="分割" c="ml-[6px]" gray />
              <Sep c="ml-[8px]" />
              <Tool n="alignTo" t="对齐" c="ml-[4px]" drop="ml-[3px]" />
              <Tool n="offset" t="偏移" c="ml-[7px]" />
              <Tool n="stretch" t="拉伸" c="ml-[7px]" />
              <Sep c="ml-[9px]" />
              <Tool n="gripSet" t="设置夹点" c="ml-[3px]" gray />
            </div>
          </div>

          {/* Property toolbar */}
          <div className="h-[28px] flex items-center">
            <div className="h-full pt-[2px] w-[568px] bg-[#f6f6f6] flex items-center pl-[5px] shrink-0">
              <Grip />
              <Select t="第2层" c="w-[56px] ml-[3px]" />
              <Select t="自定义" c="w-[69px] ml-[3px]" />
              <Select t="自定义线" c="w-[69px] ml-[3px]" />
              <Select t="ZDYX-5" c="w-[69px] ml-[3px]" />
              <Sep c="ml-[5px]" />
              <Tool n="props" t="属性" c="ml-[5px]" />
              <Tool n="editBar" t="编辑钢筋" c="ml-[7px]" />
              <Tool n="list" t="构件列表" c="ml-[7px]" />
              <Tool n="pick" t="拾取构件" c="ml-[7px]" />
            </div>
            <div className="h-full pt-[2px] ml-[75px] w-[420px] bg-[#f6f6f6] flex items-center shrink-0">
              <Grip c="ml-[2px]" />
              <Tool n="twoPt" t="两点" c="ml-[5px]" />
              <Tool n="parallel" t="平行" c="ml-[7px]" />
              <Tool n="angle" t="点角" c="ml-[7px]" drop="ml-[5px]" />
              <Tool n="threePt" t="三点辅轴" c="ml-[7px]" drop="ml-[7px]" />
              <Tool n="erase" t="删除辅轴" c="ml-[8px]" />
              <Tool n="dim" t="尺寸标注" c="ml-[7px]" drop="ml-[7px]" />
            </div>
          </div>

          {/* Draw toolbar */}
          <div className="h-[30px] flex items-center">
            <div className="h-full pt-[2px] w-[491px] bg-[#f6f6f6] flex items-center pl-[5px] shrink-0">
              <Grip />
              <Tool n="select" t="选择" c="ml-[4px]" drop="ml-[6px]" />
              <Sep c="ml-[8px]" />
              <Tool n="line" t="直线" c="ml-[5px]" />
              <Tool n="lenPt" t="点加长度" c="ml-[7px]" />
              <Tool n="arc" t="三点画弧" c="ml-[7px]" drop="ml-[7px]" />
              <Select t="" c="w-[55px] ml-[5px]" />
              <Tool n="rect" t="矩形" c="ml-[5px]" />
              <Sep c="ml-[7px]" />
              <Tool n="smart" t="智能布置" c="ml-[5px]" drop="ml-[3px]" />
            </div>
            <Grip c="ml-[574px]" />
            <div className="w-[26px] h-[26px] bg-[#f8f8f8] ml-[1px]" />
          </div>

          <Canvas />

          {/* Status bar */}
          <div className="h-[25px] pt-[2px] flex items-center pl-[4px]">
            <Grip />
            <Tool n="ortho" t="正交" c="ml-[5px]" />
            <Active n="snap" t="对象捕捉" c="ml-[5px]" w="w-[74px]" />
            <Active n="dyn" t="动态输入" c="ml-px" w="w-[74px]" />
            <Grip c="ml-[7px]" />
            <Tool n="cross" t="交点" c="ml-[4px]" />
            <Active n="perp" t="垂点" c="ml-[4px]" w="w-[51px]" />
            <Active n="mid" t="中点" c="ml-px" w="w-[49px]" />
            <Tool n="vertex" t="顶点" c="ml-[5px]" />
            <Tool n="coord" t="坐标" c="ml-[6px]" />
          </div>
        </div>
      </div>

      {/* Floating offset panel */}
      <div className="absolute left-[838px] top-0 w-[403px] h-[56px] bg-[#f0f0f0] shadow-[0_1px_4px_rgba(0,0,0,0.45)] flex flex-col">
        <div className="h-[9px] bg-white border border-[#bbb]" />
        <div className="h-[21px] bg-[#999] flex items-center justify-end pr-[7px]">
          <svg width="9" height="9">
            <path d="M1 1l7 7M8 1L1 8" stroke="#fff" strokeWidth="1.4" />
          </svg>
        </div>
        <div className="flex-1 flex items-center">
          <div className="w-[60px] h-[24px] bg-white flex items-center justify-between pl-[2px] pr-[4px] text-[#222]">
            <span>不偏移</span>
            <Caret />
          </div>
          <Sep c="ml-[4px]" />
          <span className="ml-[3px] w-[17px] text-[#777]">X=</span>
          <SpinBox v="0" c="w-[58px] ml-px" />
          <span className="ml-px w-[25px] text-[#777]">mm</span>
          <span className="ml-px w-[18px] text-[#777]">Y=</span>
          <SpinBox v="0" c="w-[58px]" />
          <span className="ml-[2px] w-[25px] text-[#777]">mm</span>
          <Sep />
          <div className="w-[11px] h-[11px] border border-[#777] ml-[4px] bg-white" />
          <span className="ml-[8px]">旋转</span>
          <SpinBox v="0.000" c="w-[68px] ml-[4px]" />
          <span className="ml-[3px] text-[#777]">°</span>
        </div>
      </div>

      {/* Score badge */}
      <div className="absolute left-[944px] -top-[28px] w-[46px] h-[46px] rounded-full bg-[#2fa552] border-2 border-[#d8efd8] flex items-end justify-center pb-[3px] text-white text-[11px] font-bold leading-none">
        73
      </div>

      {/* IME bar */}
      <div className="absolute left-[730px] top-[4px] w-[175px] h-[22px] bg-[#f6f6f6] flex items-center pl-[5px] text-[#1976c8]">
        <span className="text-[15px] font-bold leading-none w-[15px]">中</span>
        <svg viewBox="0 0 14 14" className="w-[14px] h-[14px] ml-[8px]">
          <path d="M9 1c2 5-1 9-8 9 3 4 11 4 12-3 0-3-2-5-4-6z" fill="#1976c8" />
        </svg>
        <svg viewBox="0 0 14 14" className="w-[13px] h-[13px] ml-[7px]">
          <circle cx="3.5" cy="4" r="2" fill="none" stroke="#1976c8" strokeWidth="1.3" />
          <path d="M11 7c1 1 1 3-1 4" fill="none" stroke="#1976c8" strokeWidth="2" />
        </svg>
        <svg viewBox="0 0 14 18" className="w-[12px] h-[16px] ml-[10px]">
          <rect x="4" y="1" width="6" height="10" rx="3" fill="#1976c8" />
          <path d="M2 8c0 6 10 6 10 0M7 13v4M4 17h6" fill="none" stroke="#1976c8" strokeWidth="1.3" />
        </svg>
        <svg viewBox="0 0 16 13" className="w-[16px] h-[13px] ml-[8px]">
          <rect x=".5" y=".5" width="15" height="12" rx="2" fill="#fff" stroke="#1976c8" />
          <path d="M3 4h2M6 4h2M9 4h2M12 4h1M3 7h2M6 7h2M9 7h2M12 7h1M5 10h6" stroke="#1976c8" strokeWidth="1.3" />
        </svg>
        <svg viewBox="0 0 15 15" className="w-[15px] h-[15px] ml-[8px]">
          <circle cx="6" cy="4" r="3" fill="#b8c0c8" />
          <path d="M1 14c0-5 2-6 5-6s4 1 4 2v4z" fill="#b8c0c8" />
          <rect x="10" y="9" width="4" height="5" fill="none" stroke="#b8c0c8" />
        </svg>
        <svg viewBox="0 0 13 13" className="w-[13px] h-[13px] ml-[7px]">
          <path d="M4 1l2.5 1L9 1l4 3-2 2-1-1v8H3V5L2 6 0 4z" fill="#1976c8" />
        </svg>
        <svg viewBox="0 0 15 15" className="w-[15px] h-[15px] ml-[7px]">
          <path d="M2 13L8 6c-1-3 1-5 4-5l-2 3 2 2 3-2c0 3-2 5-5 4l-6 6z" fill="#1976c8" stroke="#1976c8" strokeWidth=".8" />
        </svg>
      </div>
      <div className="absolute left-[705px] top-[2px] w-[24px] h-[24px] rounded-[5px] bg-[#f0582a] rotate-[-15deg] flex items-center justify-center text-white text-[22px] font-bold italic leading-none font-['Liberation_Sans',sans-serif]">
        S
      </div>

      {/* Right mini panel */}
      <div className="absolute left-[1304px] top-[30px] w-[8px] h-[15px] rounded-l-[4px] bg-[#2f6fc0]" />
      <div className="absolute left-[1310px] top-[24px] w-[55px] h-[50px] bg-[#f2f2f2] shadow-[0_0_3px_rgba(0,0,0,0.25)] flex flex-col">
        <div className="h-[22px] flex items-center justify-between pl-[4px] text-[#b4b8c4] text-[11px]">
          <span>Poi...</span>
          <span className="w-[18px] h-[18px] bg-[#e4e4e4] mr-[3px]" />
        </div>
        <div className="ml-px w-[52px] h-[22px] mt-[4px] border border-[#888] border-r-2 border-b-2 border-r-[#555] border-b-[#555] flex items-center justify-center text-[12px] text-[#222]">
          开始
        </div>
      </div>
    </div>
  );
}
